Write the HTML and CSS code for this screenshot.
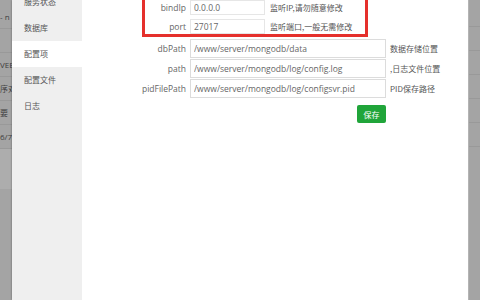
FILE: index.html
```html
<!doctype html>
<html lang="zh-CN">
<head>
  <meta charset="utf-8">
  <title>MongoDB 配置项</title>
  <link rel="stylesheet" href="styles.css">
</head>
<body>
  <div class="screen">
    <div class="backdrop backdrop-left">
      <div class="bd-row">- n</div>
      <div class="bd-row"></div>
      <div class="bd-row">VEE</div>
      <div class="bd-row">序对</div>
      <div class="bd-row">要</div>
      <div class="bd-row">6/7</div>
      <div class="bd-block"></div>
    </div>

    <div class="modal">
      <nav class="tabs">
        <div class="tab">服务状态</div>
        <div class="tab">数据库</div>
        <div class="tab active">配置项</div>
        <div class="tab">配置文件</div>
        <div class="tab">日志</div>
      </nav>

      <div class="content">
        <form class="config">
          <!-- fields that should not be touched -->
          <div class="highlight">
            <div class="field short">
              <label for="bindIp">bindIp</label>
              <input id="bindIp" type="text" value="0.0.0.0" readonly>
              <span class="hint">监听IP,请勿随意修改</span>
            </div>
            <div class="field short">
              <label for="port">port</label>
              <input id="port" type="text" value="27017" readonly>
              <span class="hint">监听端口,一般无需修改</span>
            </div>
          </div>

          <div class="field">
            <label for="dbPath">dbPath</label>
            <input id="dbPath" type="text" value="/www/server/mongodb/data" readonly>
            <span class="hint">数据存储位置</span>
          </div>
          <div class="field">
            <label for="logPath">path</label>
            <input id="logPath" type="text" value="/www/server/mongodb/log/config.log" readonly>
            <span class="hint">,日志文件位置</span>
          </div>
          <div class="field">
            <label for="pidFilePath">pidFilePath</label>
            <input id="pidFilePath" type="text" value="/www/server/mongodb/log/configsvr.pid" readonly>
            <span class="hint">PID保存路径</span>
          </div>

          <div class="actions">
            <button type="button" class="btn-save">保存</button>
          </div>
        </form>
      </div>
    </div>

    <div class="backdrop backdrop-right">
      <div class="bd-row"></div>
      <div class="bd-row"></div>
      <div class="bd-row"></div>
      <div class="bd-row"></div>
      <div class="bd-row"></div>
      <div class="bd-row"></div>
    </div>
  </div>
</body>
</html>
```

FILE: styles.css
```css
:root {
  --backdrop: #a4a4a4;
  --backdrop-line: #999;
  --tab-bg: #efefef;
  --text: #555;
  --border: #dcdcdc;
  --alert: #e5302c;
  --green: #20a53a;
}
/* Page layout */
* { box-sizing: border-box; margin: 0; padding: 0; }
body {
  font-family: 'Open Sans', 'Noto Sans CJK SC', sans-serif;
  font-size: 8.5px;
  color: var(--text);
  background: var(--backdrop);
  overflow: hidden;
}
.screen {
  display: flex;
  width: 480px;
  height: 300px;
  overflow: hidden;
}
/* Dimmed page behind the dialog */
.backdrop {
  flex: 0 0 12px;
  background: var(--backdrop);
  overflow: hidden;
  padding-top: 5px;
}
.backdrop-right {
  flex-basis: 12px;
  padding-top: 3px;
  border-left: 1px solid #b4b4b4;
}
.bd-row {
  height: 24px;
  line-height: 24px;
  border-bottom: 1px solid var(--backdrop-line);
  color: #3e3e3e;
  white-space: nowrap;
  font-size: 8px;
}
.bd-block {
  height: 40px;
  background: #adadad;
}
/* Dialog */
.modal {
  flex: 1;
  display: flex;
  background: #fff;
  box-shadow: 0 0 2px rgba(0, 0, 0, 0.4);
}
.tabs {
  flex: 0 0 70px;
  background: var(--tab-bg);
  margin-top: -11px;
  font-family: 'Noto Sans CJK SC', sans-serif;
  font-size: 8px;
}
.tab {
  height: 26px;
  line-height: 26px;
  padding-left: 12px;
  white-space: nowrap;
}
.tab.active {
  background: #fff;
}
.content {
  flex: 1;
}
.config {
  margin-left: 60px;
}
/* Red frame round the locked fields */
.highlight {
  width: 226px;
  margin-top: -3px;
  border: 3px solid var(--alert);
  display: flex;
  flex-direction: column;
  gap: 4px;
}
.field {
  display: flex;
  align-items: center;
  height: 19px;
  margin-bottom: 1px;
  white-space: nowrap;
}
.highlight .field {
  height: 15px;
  margin-bottom: 0;
}
.highlight + .field {
  margin-top: 2px;
}
.field label {
  flex: none;
  width: 44px;
  text-align: right;
  margin-right: 4px;
  color: #666;
}
.highlight .field label {
  width: 41px;
}
.field input {
  flex: none;
  width: 196px;
  min-width: 0;
  height: 19px;
  border: 1px solid var(--border);
  padding: 0 3px;
  font: inherit;
  color: #666;
  background: #fff;
  outline: none;
}
.field.short input {
  width: 75px;
  height: 15px;
  border-color: #e6e6e6;
}
.hint {
  margin-left: 4px;
  font-family: 'Noto Sans CJK SC', sans-serif;
  font-size: 8px;
}
.field.short .hint {
  margin-left: 5px;
}
/* Save button */
.actions {
  display: flex;
  justify-content: flex-end;
  width: 244px;
  margin-top: 7px;
}
.btn-save {
  width: 29px;
  height: 18px;
  border: none;
  border-radius: 2px;
  background: var(--green);
  color: #fff;
  font-family: 'Noto Sans CJK SC', sans-serif;
  font-size: 8px;
}
```
